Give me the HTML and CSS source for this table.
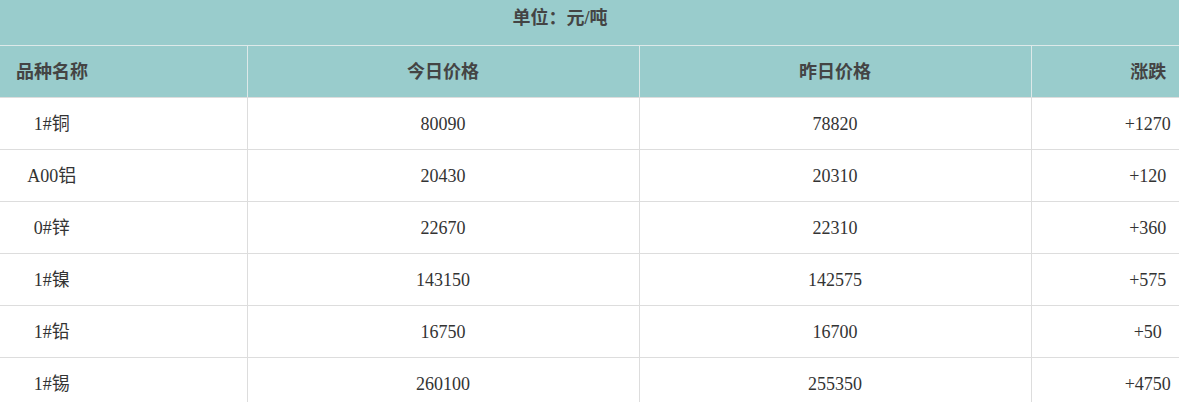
FILE: index.html
```html
<!DOCTYPE html>
<html lang="zh-CN">
<head>
<meta charset="utf-8">
<title>价格表</title>
<link rel="stylesheet" href="styles.css">
</head>
<body>
<table class="price-table">
  <colgroup>
    <col class="c-name">
    <col class="c-today">
    <col class="c-yest">
    <col class="c-change">
  </colgroup>
  <thead>
    <tr class="unit-row"><th colspan="4" class="unit">单位：元/吨</th></tr>
    <tr class="head-row">
      <th class="h-name">品种名称</th>
      <th class="h-mid">今日价格</th>
      <th class="h-mid">昨日价格</th>
      <th class="h-change">涨跌</th>
    </tr>
  </thead>
  <tbody>
    <tr><td class="d-name">1#铜</td><td class="d-mid">80090</td><td class="d-mid">78820</td><td class="d-change">+1270</td></tr>
    <tr><td class="d-name">A00铝</td><td class="d-mid">20430</td><td class="d-mid">20310</td><td class="d-change">+120</td></tr>
    <tr><td class="d-name">0#锌</td><td class="d-mid">22670</td><td class="d-mid">22310</td><td class="d-change">+360</td></tr>
    <tr><td class="d-name">1#镍</td><td class="d-mid">143150</td><td class="d-mid">142575</td><td class="d-change">+575</td></tr>
    <tr><td class="d-name">1#铅</td><td class="d-mid">16750</td><td class="d-mid">16700</td><td class="d-change">+50</td></tr>
    <tr><td class="d-name">1#锡</td><td class="d-mid">260100</td><td class="d-mid">255350</td><td class="d-change">+4750</td></tr>
  </tbody>
</table>
</body>
</html>
```
FILE: styles.css
```css
html, body {
  margin: 0;
  padding: 0;
  background: #ffffff;
}

body {
  font-family: "Liberation Serif", "Noto Sans CJK SC", serif;
  font-size: 18px;
  color: #333333;
}

.price-table {
  width: 1179px;
  border-collapse: collapse;
  table-layout: fixed;
}

.c-name { width: 247px; }
.c-today { width: 392px; }
.c-yest { width: 392px; }
.c-change { width: 148px; }

.price-table th,
.price-table td {
  padding: 0;
  line-height: 22px;
  white-space: nowrap;
  overflow: hidden;
}

.price-table .unit {
  background: #99cccc;
  color: #444444;
  font-weight: bold;
  height: 45px;
  box-sizing: border-box;
  padding: 7px 59px 16px 0;
  text-align: center;
  vertical-align: top;
  border-bottom: 1px solid #dde9e9;
}

.head-row th {
  background: #99cccc;
  color: #444444;
  font-weight: bold;
  height: 52px;
  box-sizing: border-box;
  vertical-align: middle;
  border-right: 1px solid #dde9e9;
  border-bottom: 1px solid #dddddd;
}

.head-row th:last-child {
  border-right: none;
}

.price-table .h-name {
  text-align: left;
  padding-left: 16px;
}

.price-table .h-mid {
  text-align: center;
}

.price-table .h-change {
  text-align: center;
  padding-left: 86px;
}

tbody td {
  height: 52px;
  box-sizing: border-box;
  vertical-align: middle;
  border-right: 1px solid #dddddd;
  border-bottom: 1px solid #dddddd;
}

tbody td:last-child {
  border-right: none;
}

.price-table .d-name {
  text-align: center;
  padding-right: 143px;
}

.price-table .d-mid {
  text-align: center;
}

.price-table .d-change {
  text-align: center;
  padding-left: 85px;
}
```
